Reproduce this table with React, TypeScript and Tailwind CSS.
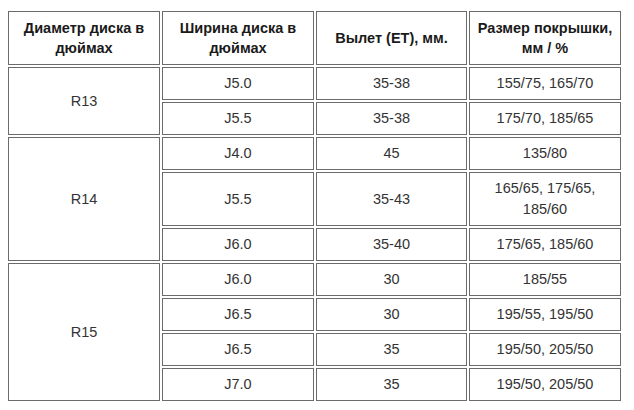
import React from "react";

type Row = { w: string; et: string; size: React.ReactNode; r?: { label: string; span: number } };

const rows: Row[] = [
  { w: "J5.0", et: "35-38", size: "155/75, 165/70", r: { label: "R13", span: 2 } },
  { w: "J5.5", et: "35-38", size: "175/70, 185/65" },
  { w: "J4.0", et: "45", size: "135/80", r: { label: "R14", span: 3 } },
  { w: "J5.5", et: "35-43", size: (<>165/65, 175/65,<br />185/60</>) },
  { w: "J6.0", et: "35-40", size: "175/65, 185/60" },
  { w: "J6.0", et: "30", size: "185/55", r: { label: "R15", span: 4 } },
  { w: "J6.5", et: "30", size: "195/55, 195/50" },
  { w: "J6.5", et: "35", size: "195/50, 205/50" },
  { w: "J7.0", et: "35", size: "195/50, 205/50" },
];

const td = "border border-[#6b6b6b] px-1 py-[5px] text-center align-middle leading-[21px] text-[14.5px] text-[#333]";
const th = "border border-[#6b6b6b] px-0 text-center align-middle leading-[20px] pt-[6px] pb-[6px] text-[14.5px] font-bold text-[#1a1a1a] whitespace-nowrap";

export default function App() {
  return (
    <div className="w-[634px] h-[410px] bg-white overflow-hidden" style={{ fontFamily: '"Liberation Sans", Arial, sans-serif' }}>
      <table className="ml-[6px] mt-[9px] table-fixed border-separate border-spacing-[2px] w-[617px]">
        <colgroup>
          <col className="w-[152px]" />
          <col className="w-[152px]" />
          <col className="w-[151px]" />
          <col className="w-[152px]" />
        </colgroup>
        <thead>
          <tr>
            <th className={th}>Диаметр диска в<br />дюймах</th>
            <th className={th}>Ширина диска в<br />дюймах</th>
            <th className={th}>Вылет (ЕТ), мм.</th>
            <th className={th}>Размер покрышки,<br />мм / %</th>
          </tr>
        </thead>
        <tbody>
          {rows.map((row, i) => (
            <tr key={i}>
              {row.r && (
                <td rowSpan={row.r.span} className={td}>
                  {row.r.label}
                </td>
              )}
              <td className={td}>{row.w}</td>
              <td className={td}>{row.et}</td>
              <td className={td}>{row.size}</td>
            </tr>
          ))}
        </tbody>
      </table>
    </div>
  );
}
